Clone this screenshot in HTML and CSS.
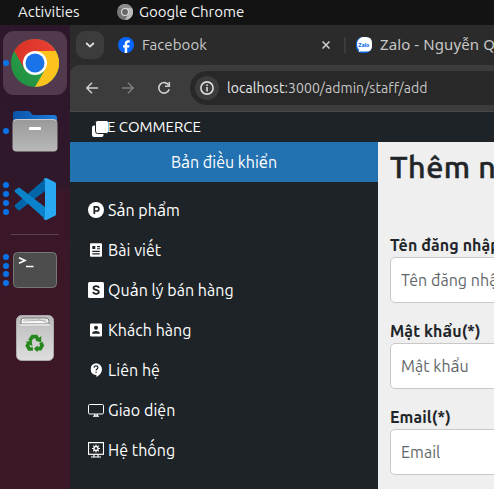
FILE: index.html
```
<!DOCTYPE html>
<html lang="vi">
<head>
<meta charset="utf-8">
<title>E COMMERCE</title>
<link rel="stylesheet" href="styles.css">
</head>
<body>
<div class="topbar">
  <span class="activities">Activities</span>
  <svg class="app-icon" width="16" height="16" viewBox="0 0 16 16"><circle cx="8" cy="8" r="8" fill="#777"/><path d="M8 4h7a8 8 0 0 1-7 12l3.500-6z" fill="#bbb"/><path d="M1 4a8 8 0 0 1 14 0H8z" fill="#8c8c8c"/><circle cx="8" cy="8" r="4" fill="#ddd"/><circle cx="8" cy="8" r="2.900" fill="#666"/></svg>
  <span class="app-name">Google Chrome</span>
</div>
<div class="desktop">
  <nav class="dock">
    <div class="slot slot-chrome">
      <div class="dots"><i></i></div>
      <div class="tile"><svg width="48" height="48" viewBox="0 0 48 48"><defs><linearGradient id="cr" x1="0" x2="1"><stop stop-color="#d93025"/><stop offset="1" stop-color="#ea4335"/></linearGradient><linearGradient id="cg" x1="0" y1="1" x2="1" y2="0"><stop stop-color="#1e8e3e"/><stop offset="1" stop-color="#34a853"/></linearGradient></defs><circle cx="24" cy="24" r="24" fill="url(#cg)"/><path d="M24 12h20.800A24 24 0 0 1 24 48L34.400 30z" fill="#fcc31e"/><path d="M24 24L3.200 12A24 24 0 0 1 44.800 12H24z" fill="url(#cr)"/><path d="M3.200 12L13.600 30 24 24z" fill="#2b9b49"/><path d="M3.200 12L13.600 30 24 12z" fill="url(#cr)"/><circle cx="24" cy="24" r="12" fill="#fff"/><circle cx="24" cy="24" r="9.500" fill="#1a73e8"/></svg></div>
    </div>
    <div class="slot slot-files">
      <div class="dots"><i></i></div>
      <svg width="46" height="42" viewBox="0 0 46 42"><defs><linearGradient id="ff" x2="0" y2="1"><stop stop-color="#999"/><stop offset="1" stop-color="#b8b8b8"/></linearGradient><linearGradient id="fb" x2="1"><stop stop-color="#0b55a8"/><stop offset="1" stop-color="#1c7ce0"/></linearGradient></defs><path d="M1 14V4q0-3 3-3h12q2 0 3 2t3 2h20q3 0 3 3v8z" fill="url(#fb)"/><rect x=".5" y="9" width="45" height="32.500" rx="4" fill="url(#ff)"/><path d="M2 11q1-1.500 3-1.500h36q2 0 3 1.500" fill="none" stroke="#ccc"/><rect x="17" y="17" width="12" height="3" rx="1" fill="#fff"/></svg>
    </div>
    <div class="slot slot-code">
      <div class="dots"><i></i><i></i><i></i><i></i></div>
      <svg width="42" height="42" viewBox="0 0 42 42"><path d="M31 1v12L6 32q-1 1-2 0l-3-3q-1-1 0-2z" fill="#0065a9"/><path d="M1 14q-1-1 0-2l3-2q1-1 2 0l25 19v12z" fill="#0a83cb"/><path d="M31 .300q1-.5 2 0l8 4q1 .5 1 1.500v30.400q0 1-1 1.500l-8 4q-1 .5-2 0l-2-1q2 0 2-2V3q0-2-2-1.500z" fill="#29a9f2"/></svg>
    </div>
    <div class="rule"></div>
    <div class="slot slot-term">
      <div class="dots"><i></i><i></i><i></i><i></i></div>
      <svg width="44" height="36" viewBox="0 0 44 36"><rect x=".5" y=".5" width="43" height="35" rx="4" fill="#4d4d4d" stroke="#777"/><path d="M6 5.800l6 2.700-6 2.700M13 14.500h7.500" fill="none" stroke="#fff" stroke-width="1.600"/></svg>
    </div>
    <div class="slot slot-trash">
      <svg width="38" height="46" viewBox="0 0 38 46"><defs><linearGradient id="tg" x2="0" y2="1"><stop stop-color="#bbb"/><stop offset="1" stop-color="#dedede"/></linearGradient></defs><rect x=".5" y=".5" width="37" height="45" rx="5" fill="url(#tg)" stroke="#aaa"/><path d="M5 9V6q0-3 3-3h22q3 0 3 3v3z" fill="#f8f8f8" stroke="#777"/><path d="M7 6l24-1M8 4l14 0 10 4" fill="none" stroke="#999" stroke-width=".7"/><path d="M4 10h30" stroke="#ddd" stroke-width="2"/><g transform="translate(1.300 1.800) scale(.92)"><g fill="none" stroke="#25871d" stroke-width="4"><path d="M13.500 26l3-4.500h4l2.500 4"/><path d="M25.500 28l1.500 3-2 3.500h-4"/><path d="M17 35h-4l-2-3.500 1.500-3"/></g><g fill="#25871d"><path d="M26 21v7l-6-2z"/><path d="M22 31v7.500l-4-3.700z"/><path d="M9 27l6.500-1 1 6z"/></g></g></svg>
    </div>
  </nav>
  <main class="browser">
    <div class="tabs">
      <div class="tab-search"><svg width="10" height="6" viewBox="0 0 10 6"><path d="M1.200 1l3.800 3.600L8.800 1" fill="none" stroke="#e3e3e3" stroke-width="1.800"/></svg></div>
      <svg class="fav fav-fb" width="16" height="16" viewBox="0 0 16 16"><circle cx="8" cy="8" r="8" fill="#0866ff"/><path d="M6.700 16v-5.400H5V8.200h1.700V7c0-2.600 1.200-3.800 3.600-3.800.5 0 1.200.1 1.500.2v2.100h-1c-1.200 0-1.600.5-1.600 1.600v1.100h2.400l-.4 2.400h-2V16z" fill="#fff"/></svg>
      <span class="tab-title title-fb">Facebook</span>
      <svg class="tab-close" width="8" height="8" viewBox="0 0 8 8"><path d="M.5.500l7 7M7.500.500l-7 7" stroke="#d0d0d0" stroke-width="1.500"/></svg>
      <div class="tab-sep"></div>
      <svg class="fav" width="16" height="16" viewBox="0 0 16 16"><rect width="16" height="16" rx="6.500" fill="#0866e8"/><path d="M6.500 0h3.500q6 0 6 6v3q0 5.500-5.500 5.500H5l-2.500.5.8-2Q1 11 1 7.500 1 1.500 6.500 0z" fill="#fff"/><text x="2.300" y="9.700" class="zalo-mark">Zalo</text></svg>
      <span class="tab-title title-zalo">Zalo - Nguyễn Q</span>
    </div>
    <div class="toolbar">
      <svg class="nav-icon" width="12" height="12" viewBox="0 0 12 12"><path d="M12 6H1M6 .800L.9 6 6 11.200" fill="none" stroke="#cfcfcf" stroke-width="1.500"/></svg>
      <svg class="nav-icon" width="12" height="12" viewBox="0 0 12 12"><path d="M0 6h11M6 .800L11.100 6 6 11.200" fill="none" stroke="#7d7d7d" stroke-width="1.500"/></svg>
      <svg class="nav-icon" width="14" height="14" viewBox="0 0 14 14"><path d="M11.700 4.200A5.300 5.300 0 1 0 12.200 8.300" fill="none" stroke="#cfcfcf" stroke-width="1.600"/><path d="M12.300 1v4.300H8" fill="none" stroke="#cfcfcf" stroke-width="1.600"/></svg>
      <div class="omnibox">
        <span class="info"><svg width="14" height="14" viewBox="0 0 14 14"><circle cx="7" cy="7" r="6.100" fill="none" stroke="#dedede" stroke-width="1.600"/><path d="M7 6v4.500M7 3.400v1.500" stroke="#dedede" stroke-width="1.600"/></svg></span>
        <span class="url"><b>localhost</b>:3000/admin/staff/add</span>
      </div>
    </div>
    <header class="site-head">
      <svg width="16" height="16" viewBox="0 0 16 16"><rect y="4.500" width="11.500" height="11.500" rx="2" fill="#fff"/><rect x="3.500" y="-.5" width="13" height="13" rx="2" fill="#fff" stroke="#1d2327"/></svg><span>E COMMERCE</span>
    </header>
    <div class="page">
      <aside class="sidebar">
        <div class="dash"><span>Bản điều khiển</span></div>
        <ul class="menu">
          <li><svg width="16" height="16" viewBox="0 0 16 16"><circle cx="8" cy="8" r="8" fill="#fff"/><path d="M6.300 12V4.900h2.500a2 2 0 0 1 0 4.100H6.500" fill="none" stroke="#1d2327" stroke-width="1.700"/></svg><span>Sản phẩm</span></li>
          <li><svg width="16" height="16" viewBox="0 0 16 16"><rect x="2" y="1.300" width="12" height="13.400" rx="1" fill="#fff"/><path d="M4.300 4h3v3h-3zM9 4h3v1.200H9zM9 6.200h3v1H9zM4.300 8.700h7.400v1.200H4.300zM4.300 11.300h7.400v1.200H4.300z" fill="#1d2327"/></svg><span>Bài viết</span></li>
          <li><svg width="16" height="16" viewBox="0 0 16 16"><rect width="16" height="16" rx="1.500" fill="#fff"/><path d="M10.900 5.900C10.600 4.600 9.600 4.100 8.100 4.100 6.500 4.100 5.500 4.900 5.500 6c0 2.600 5.300 1.200 5.300 4 0 1.200-1.100 1.900-2.700 1.900-1.700 0-2.700-.7-2.900-2" fill="none" stroke="#1d2327" stroke-width="1.800"/></svg><span>Quản lý bán hàng</span></li>
          <li><svg width="16" height="16" viewBox="0 0 16 16"><rect x="2" y="1.500" width="12" height="13" rx="1" fill="#fff"/><circle cx="8" cy="5.800" r="2" fill="#1d2327"/><path d="M4.200 11.800v-.8c0-1.300 2-2.100 3.800-2.100s3.800.8 3.800 2.100v.8z" fill="#1d2327"/></svg><span>Khách hàng</span></li>
          <li><svg width="16" height="16" viewBox="0 0 16 16"><path d="M8 1.200a6 6 0 0 1 6 6c0 3.200-2.300 6.200-5.600 7.800v-1.900H8A6 6 0 0 1 8 1.200z" fill="#fff"/><path d="M6.100 5.700c0-1.100.8-1.800 1.900-1.800s1.900.7 1.900 1.700c0 1.400-1.800 1.500-1.800 3M8.100 9.700v1.300" fill="none" stroke="#1d2327" stroke-width="1.200"/></svg><span>Liên hệ</span></li>
          <li><svg width="16" height="16" viewBox="0 0 16 16"><rect x=".5" y="2.500" width="15" height="9.500" rx="1.200" fill="none" stroke="#fff"/><path d="M6.500 12v2M9.500 12v2M5 14.300h6M6 13.200h4" stroke="#fff"/></svg><span>Giao diện</span></li>
          <li><svg width="16" height="16" viewBox="0 0 16 16"><rect x=".5" y=".6" width="15" height="11.700" fill="none" stroke="#fff" stroke-width="1.200"/><path d="M6 12.500v2M10 12.500v2M3 15h10" stroke="#fff" stroke-width="1.200"/><circle cx="8" cy="6.500" r="2" fill="none" stroke="#fff" stroke-width="1.300"/><path d="M8 2.500v1.800M8 8.700v1.800M4 6.500h1.800M10.200 6.500H12M5.200 3.700l1.200 1.200M9.600 8.100l1.200 1.200M10.800 3.700L9.600 4.900M6.400 8.100L5.200 9.300" stroke="#fff" stroke-width="1.100"/></svg><span>Hệ thống</span></li>
        </ul>
      </aside>
      <section class="content">
        <h2>Thêm n</h2>
        <form>
          <div class="field"><label for="u">Tên đăng nhập</label><input id="u" placeholder="Tên đăng nhập"></div>
          <div class="field"><label for="p">Mật khẩu(*)</label><input id="p" placeholder="Mật khẩu"></div>
          <div class="field"><label for="e">Email(*)</label><input id="e" placeholder="Email"></div>
        </form>
      </section>
    </div>
  </main>
</div>
</body>
</html>
```
FILE: styles.css
```
* { box-sizing: border-box; }
body {
  margin: 0;
  width: 494px;
  height: 489px;
  overflow: hidden;
  font-family: Ubuntu, "Noto Sans", sans-serif;
  font-size: 16px;
  white-space: nowrap;
}
svg { display: block; flex: none; }
.topbar {
  height: 25px;
  background: #131313;
  color: #f2f2f2;
  display: flex;
  align-items: center;
  padding: 0 0 2px 18px;
  font-size: 15px;
}
.activities { width: 99px; }
.app-name { margin-left: 6px; }
.desktop { display: flex; height: 464px; }
.dock {
  width: 70px;
  flex: none;
  background: linear-gradient(172deg, #2d172a 0, #30182b 36%, #3a1728 37%, #3c1727 100%);
}
.slot { display: flex; align-items: center; padding-left: 3px; }
.dots { width: 6px; flex: none; display: grid; gap: 2.700px; }
.dots i { width: 6px; height: 6px; border-radius: 50%; background: #0a73e8; }
.slot-chrome { height: 76px; position: relative; }
.slot-chrome .dots { position: absolute; z-index: 1; }
.tile {
  width: 64px;
  height: 64px;
  border-radius: 11px;
  background: #52394e;
  padding: 8px;
}
.slot-files { height: 60px; gap: 3px; }
.slot-code { height: 75px; gap: 5px; }
.rule { width: 48px; height: 1px; margin: -2px 0 0 11px; background: #5b4350; }
.slot-term { height: 70px; gap: 4px; }
.slot-trash { height: 65px; padding-left: 16px; }
.browser { flex: 1; min-width: 0; background: #2b2b2b; }
.tabs {
  height: 40px;
  display: flex;
  align-items: center;
  padding-left: 6px;
  overflow: hidden;
}
.tab-search {
  width: 28px;
  height: 28px;
  flex: none;
  border-radius: 9px;
  background: #3c3c3c;
  display: grid;
  place-items: center;
}
.fav-fb { margin-left: 14px; }
.tab-title { color: #c7c7c7; margin: -2px 0 0 8px; font-size: 15px; flex: none; }
.title-fb { width: 180px; letter-spacing: .1px; }
.tab-sep { width: 2px; height: 16px; margin: 0 10px 0 14px; background: #3c3c3c; flex: none; }
.title-zalo { font-family: "Noto Sans", sans-serif; letter-spacing: .1px; }
.zalo-mark { font: bold 5.500px Roboto, sans-serif; fill: #0866e8; }
.toolbar {
  height: 47px;
  background: #3c3c3c;
  border-bottom: 1px solid #4a4a4a;
  border-top-left-radius: 9px;
  display: flex;
  align-items: center;
  padding-left: 16px;
}
.nav-icon { margin-right: 24px; }
.nav-icon + .nav-icon { margin-right: 23px; }
.nav-icon + .nav-icon + .nav-icon { margin-right: 19px; }
.omnibox {
  flex: 1;
  height: 34px;
  border-radius: 17px 0 0 17px;
  background: #282828;
  display: flex;
  align-items: center;
  padding-left: 5px;
}
.info {
  width: 24px;
  height: 24px;
  border-radius: 50%;
  background: #3c3c3c;
  display: grid;
  place-items: center;
}
.url { margin-left: 8px; color: #c7c7c7; font-size: 14px; letter-spacing: .06px; }
.url b { font-weight: 400; color: #e8e8e8; }
.site-head {
  height: 30px;
  background: #1d2327;
  color: #fff;
  display: flex;
  align-items: center;
  padding-left: 22px;
  font-size: 15px;
}
.site-head svg { margin-top: 3px; }
.site-head span { margin: -2px 0 0 -1px; }
.page { display: flex; height: 347px; }
.sidebar { width: 308px; flex: none; background: #1d2327; color: #fff; }
.dash {
  height: 40px;
  background: #2271b1;
  display: flex;
  align-items: center;
  justify-content: center;
}
.menu { list-style: none; margin: 8px 0 0; padding: 0 0 0 18px; }
.menu li { height: 40px; display: flex; align-items: center; gap: 4px; letter-spacing: .05px; }
.content { flex: 1; overflow: hidden; background: #efefef; color: #212529; padding: 6px 0 0 12px; }
h2 {
  margin: 0 0 50px;
  font-size: 30.500px;
  line-height: 38px;
  font-weight: 500;
  letter-spacing: .5px;
  -webkit-text-stroke: .5px #212529;
}
.field { height: 86px; margin-top: -3px; width: 300px; }
.field + .field { margin-top: 0; }
label { display: block; height: 24px; line-height: 24px; font-weight: 700; letter-spacing: .1px; }
input {
  display: block;
  width: 300px;
  height: 46px;
  border: 1px solid #c8c8c8;
  border-radius: 5px;
  background: #fff;
  padding: 0 10px;
  font: inherit;
  letter-spacing: .05px;
}
input::placeholder { color: #62676b; opacity: 1; }
```
